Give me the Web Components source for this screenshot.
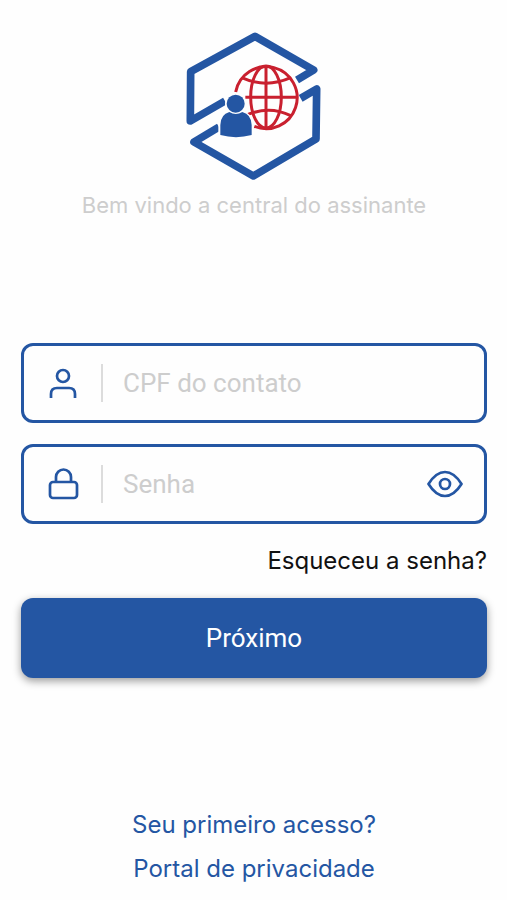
<!DOCTYPE html>
<html lang="pt-BR">
<head>
<meta charset="utf-8">
<meta name="viewport" content="width=device-width, initial-scale=1">
<title>Central do assinante</title>
<style>
    body {
        margin: 0;
        background: #fefefe;
        font-family: Inter, "Liberation Sans", sans-serif;
        --blue: #2456a3;
        --muted: #cdcdcd;
    }
</style>
</head>
<body>
<login-page></login-page>

<script>
class BrandLogo extends HTMLElement {
    constructor() {
        super();
        const shadow = this.attachShadow({ mode: 'open' });
        shadow.innerHTML = `
        <style>
            :host { display: block; width: 136px; height: 148px; }
            svg { display: block; width: 100%; height: 100%; }
        </style>
        <svg viewBox="32 36 408 444" fill="none" role="img" aria-label="Logo">
            <!-- hexagon, in two halves -->
            <g stroke="#2456a3" stroke-width="23" stroke-linejoin="round">
                <path d="M365 180 L415 150 L239 49 L46 155 L45 303 L149 243"/>
                <path d="M376 235 L424 207 L422 357 L234 468 L56 366 L131 321"/>
            </g>
            <!-- globe -->
            <g stroke="#c9202f" stroke-width="9">
                <path d="M181 216 A93 93 0 1 1 237 319"/>
                <ellipse cx="272" cy="231" rx="46" ry="93"/>
                <path d="M272 138 V324 M210 232 H365"/>
                <path d="M199 173 Q272 206 346 173 M216 284 Q284 256 346 287"/>
            </g>
            <!-- person -->
            <path d="M129 356 V316 Q131 279 163 272 Q181 286 200 272 Q233 279 235 316 V356 Z" fill="#fefefe"/>
            <circle cx="181" cy="251" r="32" fill="#fefefe"/>
            <circle cx="181" cy="251" r="27" fill="#2456a3"/>
            <path d="M135 345 V315 Q136 283 162 276 Q181 288 201 276 Q228 283 229 315 V345 Q182 358 135 345 Z" fill="#2456a3"/>
        </svg>
        `;
    }
}

class LineIcon extends HTMLElement {
    static shapes = {
        user: '<circle cx="18" cy="11" r="6"/><path d="M6 33 V29 Q6 23 12 23 H24 Q30 23 30 29 V33"/>',
        lock: '<rect x="5" y="16" width="27" height="16" rx="3"/><path d="M11 16 V11 A7 7 0 0 1 26 11 V16"/>',
        eye: '<path d="M1.500 18 Q9 6 18 6 Q27 6 34.500 18 Q27 30 18 30 Q9 30 1.500 18 Z"/><circle cx="18" cy="18" r="5"/>'
    };

    constructor() {
        super();
        this.attachShadow({ mode: 'open' });
    }

    connectedCallback() {
        this.shadowRoot.innerHTML = `
        <style>
            :host { display: block; flex: none; width: 36px; height: 36px; color: var(--blue); }
            svg { display: block; }
        </style>
        <svg width="36" height="36" viewBox="0 0 36 36" fill="none" stroke="currentColor"
             stroke-width="2.700" stroke-linejoin="round" aria-hidden="true">
            ${LineIcon.shapes[this.getAttribute('name')]}
        </svg>
        `;
    }
}

class TextField extends HTMLElement {
    constructor() {
        super();
        this.attachShadow({ mode: 'open' });
    }

    connectedCallback() {
        const label = this.getAttribute('label');
        const type = this.getAttribute('type') || 'text';
        this.shadowRoot.innerHTML = `
        <style>
            :host { display: block; }
            .box {
                display: flex;
                align-items: center;
                box-sizing: border-box;
                height: 80px;
                padding: 0 21px;
                border: 3px solid var(--blue);
                border-radius: 12px;
            }
            label { display: flex; align-items: center; }
            .divider { width: 2px; height: 38px; margin: 0 20px; background: #dcdcdc; }
            input {
                flex: 1;
                min-width: 0;
                padding: 0;
                border: 0;
                outline: 0;
                background: none;
                color: #222;
                font: 26px/36px Roboto, sans-serif;
            }
            input::placeholder { color: var(--muted); opacity: 1; }
        </style>
        <div class="box">
            <label for="field" aria-label="${label}"><line-icon name="${this.getAttribute('icon')}"></line-icon></label>
            <span class="divider"></span>
            <input id="field" type="${type}" placeholder="${label}">
            <slot name="action"></slot>
        </div>
        `;
    }

    toggleVisibility() {
        const input = this.shadowRoot.querySelector('#field');
        input.type = input.type === 'password' ? 'text' : 'password';
    }
}

class PrimaryButton extends HTMLElement {
    constructor() {
        super();
        const shadow = this.attachShadow({ mode: 'open' });
        shadow.innerHTML = `
        <style>
            :host { display: block; }
            button {
                display: block;
                width: 100%;
                height: 80px;
                border: 0;
                border-radius: 12px;
                background: var(--blue);
                box-shadow: 0 3px 8px rgba(0, 0, 0, .4);
                color: #fff;
                font: 26px/36px Roboto, sans-serif;
                cursor: pointer;
            }
        </style>
        <button type="button"><slot></slot></button>
        `;
    }
}

class TextLink extends HTMLElement {
    constructor() {
        super();
        const shadow = this.attachShadow({ mode: 'open' });
        shadow.innerHTML = `
        <style>
            :host { display: block; }
            a { color: inherit; text-decoration: none; }
        </style>
        <a href="#"><slot></slot></a>
        `;
    }
}

class LoginPage extends HTMLElement {
    constructor() {
        super();
        const shadow = this.attachShadow({ mode: 'open' });
        shadow.innerHTML = `
        <style>
            :host {
                display: flex;
                flex-direction: column;
                box-sizing: border-box;
                min-height: 100vh;
                padding: 32px 20px 9px 21px;
                font-size: 24px;
            }
            header { display: flex; flex-direction: column; align-items: center; gap: 9px; }
            h1 {
                margin: 0;
                color: var(--muted);
                font-size: 22px;
                font-weight: 400;
                line-height: 32px;
                text-align: center;
            }
            form { display: flex; flex-direction: column; gap: 21px; margin-top: 122px; }
            .forgot { align-self: flex-end; line-height: 32px; color: #111; }
            .eye { padding: 0; border: 0; background: none; cursor: pointer; }
            footer {
                margin-top: auto;
                color: var(--blue);
                line-height: 44px;
                text-align: center;
            }
        </style>
        <header>
            <brand-logo></brand-logo>
            <h1>Bem vindo a central do assinante</h1>
        </header>
        <form>
            <text-field icon="user" label="CPF do contato"></text-field>
            <text-field icon="lock" label="Senha" type="password">
                <button class="eye" slot="action" type="button" aria-label="Mostrar senha">
                    <line-icon name="eye"></line-icon>
                </button>
            </text-field>
            <text-link class="forgot">Esqueceu a senha?</text-link>
            <primary-button>Próximo</primary-button>
        </form>
        <footer>
            <text-link>Seu primeiro acesso?</text-link>
            <text-link>Portal de privacidade</text-link>
        </footer>
        `;

        // Show or hide what was typed in the password field.
        const eye = shadow.querySelector('.eye');
        eye.addEventListener('click', () => eye.parentElement.toggleVisibility());
    }
}

customElements.define('brand-logo', BrandLogo);
customElements.define('line-icon', LineIcon);
customElements.define('text-field', TextField);
customElements.define('primary-button', PrimaryButton);
customElements.define('text-link', TextLink);
customElements.define('login-page', LoginPage);
</script>
</body>
</html>
